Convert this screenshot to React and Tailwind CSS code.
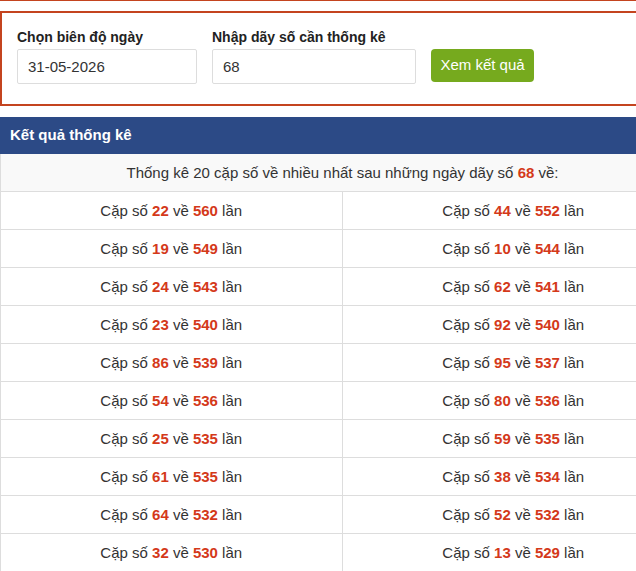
const pairs = [
  [["22", "560"], ["44", "552"]],
  [["19", "549"], ["10", "544"]],
  [["24", "543"], ["62", "541"]],
  [["23", "540"], ["92", "540"]],
  [["86", "539"], ["95", "537"]],
  [["54", "536"], ["80", "536"]],
  [["25", "535"], ["59", "535"]],
  [["61", "535"], ["38", "534"]],
  [["64", "532"], ["52", "532"]],
  [["32", "530"], ["13", "529"]],
];

function Pair({ so, lan }) {
  return (
    <span>
      Cặp số <b className="text-[#d4391a]">{so}</b> về <b className="text-[#d4391a]">{lan}</b> lần
    </span>
  );
}

export default function App() {
  return (
    <div className="w-[636px] h-[571px] overflow-hidden bg-white font-['Liberation_Sans',Arial,sans-serif] text-[#333]">
      <div className="w-[684px]">
        <div className="border-t border-[#c4441f] pt-[10px]">
          <div className="border-2 border-r-0 border-[#c4441f] px-[15px] pt-[14px] pb-[20px] flex items-end gap-[15px]">
            <div className="w-[180px]">
              <label className="block text-[14px] font-bold leading-5 mb-[2px] text-[#222]">Chọn biên độ ngày</label>
              <input
                defaultValue="31-05-2026"
                className="w-full h-[35px] border border-[#ddd] rounded-[2px] px-[10px] text-[15px] text-[#333] outline-none"
              />
            </div>
            <div className="w-[204px]">
              <label className="block text-[14px] font-bold leading-5 mb-[2px] text-[#222]">Nhập dãy số cần thống kê</label>
              <input
                defaultValue="68"
                className="w-full h-[35px] border border-[#ddd] rounded-[2px] px-[10px] text-[15px] text-[#333] outline-none"
              />
            </div>
            <button className="mb-[2px] h-[33px] w-[103px] bg-[#76aa1e] text-white text-[15px] rounded-[4px]">
              Xem kết quả
            </button>
          </div>
        </div>

        <div className="mt-[11px]">
          <div className="bg-[#2c4a86] h-[37px] flex items-center px-[10px] text-white text-[15px] font-bold">
            Kết quả thống kê
          </div>
          <div className="bg-[#f9f9f9] h-[38px] flex items-center justify-center border-b border-l border-[#ddd] text-[15px] pt-[1px]">
            <span>
              Thống kê 20 cặp số về nhiều nhất sau những ngày dãy số <b className="text-[#d4391a]">68</b> về:
            </span>
          </div>
          {pairs.map((row, i) => (
            <div key={i} className="grid grid-cols-2 h-[38px] border-b border-l border-[#ddd] text-[15px]">
              <div className="flex items-center justify-center border-r border-[#ddd] pt-[2px]">
                <Pair so={row[0][0]} lan={row[0][1]} />
              </div>
              <div className="flex items-center justify-center pt-[2px]">
                <Pair so={row[1][0]} lan={row[1][1]} />
              </div>
            </div>
          ))}
        </div>
      </div>
    </div>
  );
}
